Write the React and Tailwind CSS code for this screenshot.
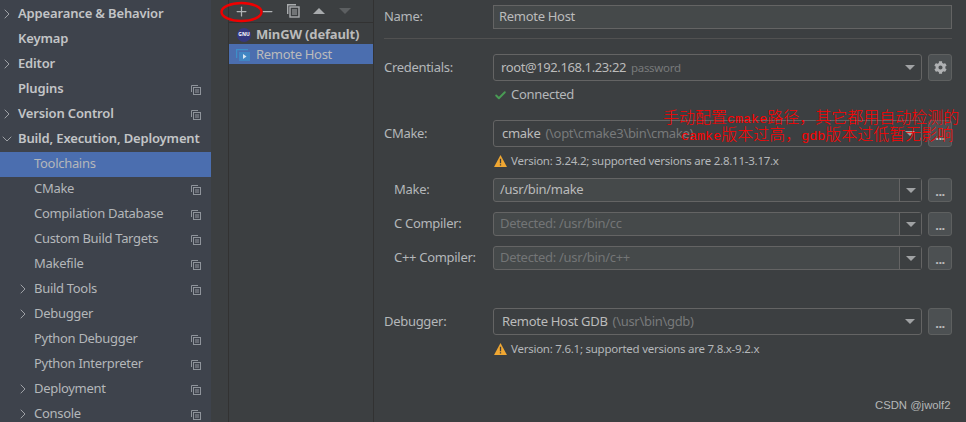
import { Check, ChevronDown, ChevronRight, Minus, Plus } from 'lucide-react'
import { FaCog } from 'react-icons/fa'

const sidebar = [
  { label: 'Appearance & Behavior', bold: true, arrow: 'right' },
  { label: 'Keymap', bold: true },
  { label: 'Editor', bold: true, arrow: 'right' },
  { label: 'Plugins', bold: true, copy: true },
  { label: 'Version Control', bold: true, arrow: 'right', copy: true },
  { label: 'Build, Execution, Deployment', bold: true, arrow: 'down' },
  { label: 'Toolchains', sub: true, active: true },
  { label: 'CMake', sub: true, copy: true },
  { label: 'Compilation Database', sub: true, copy: true },
  { label: 'Custom Build Targets', sub: true, copy: true },
  { label: 'Makefile', sub: true, copy: true },
  { label: 'Build Tools', sub: true, arrow: 'right', copy: true },
  { label: 'Debugger', sub: true, arrow: 'right' },
  { label: 'Python Debugger', sub: true, copy: true },
  { label: 'Python Interpreter', sub: true, copy: true },
  { label: 'Deployment', sub: true, arrow: 'right', copy: true },
  { label: 'Console', sub: true, arrow: 'right', copy: true },
]

function CopyIcon() {
  return (
    <svg width="10" height="10" viewBox="0 0 10 10" fill="none" stroke="#8f949b" strokeWidth="1" className="shrink-0">
      <path d="M.5 7V.5H7" />
      <rect x="2.5" y="2.5" width="7" height="7" />
      <path d="M4 5h4M4 7h4" />
    </svg>
  )
}

function SidebarRow({ item }) {
  return (
    <div className={`relative flex h-[25px] shrink-0 items-center pr-[10px] ${item.sub ? 'pl-[34px]' : 'pl-[18px]'} ${item.active ? 'bg-[#4b6eaf]' : ''}`}>
      {item.arrow === 'right' && (
        <ChevronRight size={16} strokeWidth={1.4} className={`absolute top-[4px] text-[#a5a8ac] ${item.sub ? 'left-[15px]' : 'left-[-1px]'}`} />
      )}
      {item.arrow === 'down' && <ChevronDown size={16} strokeWidth={1.4} className="absolute left-[-1px] top-[4px] text-[#a5a8ac]" />}
      <span className={`flex-1 whitespace-nowrap pb-[2px] text-[13px] ${item.bold ? 'font-semibold tracking-[-0.15px] text-[#c3c5c7]' : 'text-[#b4b7ba]'}`}>{item.label}</span>
      {item.copy && <CopyIcon />}
    </div>
  )
}

function Caret() {
  return <div className="h-0 w-0 border-x-[5px] border-t-[5px] border-x-transparent border-t-[#a0a2a4]" />
}

function Warning({ text }) {
  return (
    <div className="flex h-[18px] items-center gap-[4px] pl-[1px] text-[11.5px] tracking-[-0.25px] text-[#b4b7ba]">
      <svg width="13" height="12" viewBox="0 0 14 13" className="shrink-0">
        <path d="M7 0 14 13H0Z" fill="#f0a732" />
        <path d="M6.3 4h1.4v5H6.3zM6.3 10h1.4v1.5H6.3z" fill="#3c3f41" />
      </svg>
      {text}
    </div>
  )
}

function BrowseButton({ tall, children }) {
  return (
    <div className={`flex w-[24px] shrink-0 items-center justify-center rounded-[3px] border border-[#5e6060] bg-[#4c5052] text-[13px] leading-none text-[#bbbbbb] ${tall ? 'h-[27px]' : 'h-[24px]'}`}>
      {children ?? <span className="pt-[3px] font-bold tracking-[-0.5px]">...</span>}
    </div>
  )
}

// Combo box with a detached arrow button, as in Make / C / C++ rows
function PathRow({ label, value, muted }) {
  return (
    <div className="flex h-[24px] items-center">
      <span className="w-[109px] shrink-0 pl-[10px] text-[13px] text-[#b4b7ba]">{label}</span>
      <div className="flex h-[24px] w-[429px] items-center rounded-[3px] border border-[#646464] bg-[#45494a]">
        <span className={`flex-1 pl-[6px] text-[13px] ${muted ? 'text-[#737576]' : 'text-[#bbbbbb]'}`}>{value}</span>
        <div className="flex h-full w-[22px] items-center justify-center border-l border-[#646464] bg-[#3c3f41]">
          <Caret />
        </div>
      </div>
      <div className="ml-[6px]">
        <BrowseButton />
      </div>
    </div>
  )
}

function ComboRow({ label, children, button }) {
  return (
    <div className="flex h-[27px] items-center">
      <span className="w-[109px] shrink-0 text-[13px] text-[#b4b7ba]">{label}</span>
      <div className="flex h-[27px] w-[429px] items-center rounded-[3px] border border-[#646464] bg-[#3c3f41] pr-[6px]">
        <div className="flex-1 truncate text-[13px] text-[#bbbbbb]">{children}</div>
        <Caret />
      </div>
      <div className="ml-[6px]">{button}</div>
    </div>
  )
}

export default function App() {
  return (
    <div className="relative flex h-[422px] w-[966px] overflow-hidden bg-[#3c3f41] font-['Noto_Sans','Open_Sans',sans-serif] tracking-[-0.3px]">
      <div className="flex h-full w-[211px] shrink-0 flex-col overflow-hidden bg-[#3e434c] pt-[2px]">
        {sidebar.map(item => (
          <SidebarRow key={item.label} item={item} />
        ))}
      </div>

      <div className="ml-[17px] flex h-full w-[146px] shrink-0 flex-col border-x border-[#323232]">
        <div className="flex h-[23px] items-center border-b border-[#323232] text-[#b0b3b5]">
          <div className="flex w-[25px] justify-center"><Plus size={15} strokeWidth={2} /></div>
          <div className="flex w-[26px] justify-center"><Minus size={15} strokeWidth={2} /></div>
          <div className="flex w-[26px] justify-center">
            <svg width="13" height="14" viewBox="0 0 13 14" fill="none" stroke="#a8abad" strokeWidth="1.4">
              <path d="M.7 10V.7H9" />
              <rect x="3" y="3" width="9" height="10" />
              <path d="M5 6h5M5 8h5M5 10h5" strokeWidth="1" />
            </svg>
          </div>
          <div className="flex w-[26px] justify-center">
            <div className="h-0 w-0 border-x-[6px] border-b-[6px] border-x-transparent border-b-[#a8abad]" />
          </div>
          <div className="flex w-[26px] justify-center">
            <div className="h-0 w-0 border-x-[6px] border-t-[6px] border-x-transparent border-t-[#5c5f61]" />
          </div>
        </div>
        <div className="flex h-[21px] items-center pl-[8px] pt-[2px] text-[13px] font-bold tracking-[-0.15px] text-[#bbbbbb]">
          <div className="mr-[5px] flex h-[14px] w-[14px] shrink-0 items-center justify-center rounded-full bg-[#35387f] text-[5px] font-bold leading-none tracking-normal text-white">GNU</div>
          MinGW (default)
        </div>
        <div className="flex h-[20px] items-center bg-[#4b6eaf] pl-[7px] pt-[2px] text-[13px] text-[#bbbbbb]">
          <svg width="15" height="15" viewBox="0 0 15 15" className="mr-[5px] mt-[-2px] shrink-0">
            <path d="M.6 11V2.6H12" fill="none" stroke="#3d8fc9" strokeWidth="1.2" />
            <rect x="3" y="5" width="11" height="9" fill="#3d8fc9" opacity="0.75" />
            <path d="M7 7l3.5 2.5L7 12z" fill="#d8e6f2" />
          </svg>
          Remote Host
        </div>
      </div>

      <div className="flex h-full w-[593px] flex-col pl-[10px] pr-[14px] pt-[5px]">
        <div className="flex h-[24px] items-center">
          <span className="w-[109px] shrink-0 text-[13px] text-[#b4b7ba]">Name:</span>
          <div className="flex h-[24px] flex-1 items-center border border-[#646464] bg-[#45494a] pl-[5px] text-[13px] text-[#bbbbbb]">Remote Host</div>
        </div>
        <div className="mt-[9px] h-px bg-[#515151]" />
        <div className="mt-[15px]">
          <ComboRow label="Credentials:" button={<BrowseButton tall><FaCog size={13} className="text-[#afb1b3]" /></BrowseButton>}>
            <span className="pl-[7px] tracking-[-0.4px]">root@192.168.1.23:22</span>
            <span className="ml-[5px] text-[11.5px] text-[#787a7b]">password</span>
          </ComboRow>
        </div>
        <div className="mt-[5px] flex h-[18px] items-center gap-[4px] pl-[110px] text-[13px] text-[#b4b7ba]">
          <Check size={13} strokeWidth={3.5} className="text-[#499c54]" />
          Connected
        </div>
        <div className="mt-[16px]">
          <ComboRow label="CMake:" button={<BrowseButton tall />}>
            <span className="pl-[8px]">cmake</span>
            <span className="ml-[5px] text-[#787a7b]">(\opt\cmake3\bin\cmake)</span>
          </ComboRow>
        </div>
        <div className="mt-[5px] pl-[109px]">
          <Warning text="Version: 3.24.2; supported versions are 2.8.11-3.17.x" />
        </div>
        <div className="mt-[8px] flex flex-col gap-[10px]">
          <PathRow label="Make:" value="/usr/bin/make" />
          <PathRow label="C Compiler:" value="Detected: /usr/bin/cc" muted />
          <PathRow label="C++ Compiler:" value="Detected: /usr/bin/c++" muted />
        </div>
        <div className="mt-[38px]">
          <ComboRow label="Debugger:" button={<BrowseButton tall />}>
            <span className="pl-[8px]">Remote Host GDB</span>
            <span className="ml-[5px] text-[#787a7b]">(\usr\bin\gdb)</span>
          </ComboRow>
        </div>
        <div className="mt-[5px] pl-[109px]">
          <Warning text="Version: 7.6.1; supported versions are 7.8.x-9.2.x" />
        </div>
      </div>

      {/* annotations painted over the screenshot */}
      <svg width="44" height="22" viewBox="0 0 44 22" fill="none" className="absolute left-[220px] top-[1px]">
        <ellipse cx="21.5" cy="11" rx="20" ry="9" stroke="#f00000" strokeWidth="2.4" />
      </svg>
      <div className="absolute left-[663px] top-[105px] whitespace-nowrap font-['Noto_Sans_CJK_SC','Liberation_Mono',monospace] text-[16px] font-light leading-[22px] tracking-normal text-[#ff0000]">
        手动配置<span className="font-['Liberation_Mono'] text-[13.4px]">cmake</span>路径，其它都用自动检测的
      </div>
      <div className="absolute left-[681px] top-[122px] whitespace-nowrap font-['Noto_Sans_CJK_SC','Liberation_Mono',monospace] text-[16px] font-light leading-[22px] tracking-normal text-[#ff0000]">
        <span className="font-['Liberation_Mono'] text-[13.4px]">camke</span>版本过高，<span className="font-['Liberation_Mono'] text-[13.4px]">gdb</span>版本过低暂无影响
      </div>
      <div className="absolute left-[875px] top-[397px] font-['Liberation_Sans',sans-serif] text-[11.3px] leading-[16px] tracking-normal text-[#b5b7b8]">CSDN @jwolf2</div>
    </div>
  )
}
